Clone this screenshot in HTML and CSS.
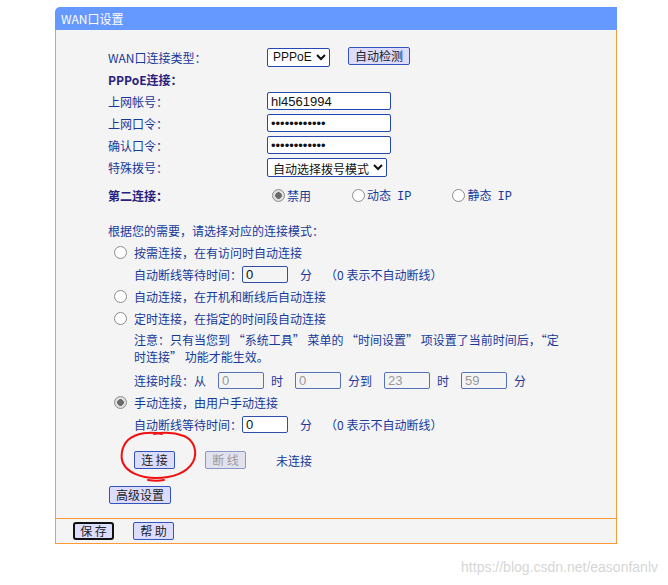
FILE: index.html
```html
<!DOCTYPE html>
<html lang="zh-CN">
  <head>
    <meta charset="utf-8" />
    <title>WAN口设置</title>
    <link rel="stylesheet" href="styles.css">
  </head>

  <body>
    <div class="panel">
      <div class="panel-head">WAN口设置</div>

      <!-- 主体 -->
      <div class="panel-body">
        <div class="row">
          <span class="label">WAN口连接类型：</span>
          <select class="field sel-type"><option>PPPoE</option></select>
          <button class="btn btn-detect">自动检测</button>
        </div>
        <div class="row">
          <span class="label strong">PPPoE连接：</span>
        </div>
        <div class="row">
          <span class="label">上网帐号：</span>
          <input class="field text" type="text" value="hl4561994">
        </div>
        <div class="row">
          <span class="label">上网口令：</span>
          <input class="field text" type="password" value="hl4561994abc">
        </div>
        <div class="row">
          <span class="label">确认口令：</span>
          <input class="field text" type="password" value="hl4561994abc">
        </div>
        <div class="row">
          <span class="label">特殊拨号：</span>
          <select class="field sel-dial"><option>自动选择拨号模式</option></select>
        </div>

        <div class="row second">
          <span class="label strong">第二连接：</span>
          <div class="radio-group">
            <label class="opt"><input type="radio" name="second" checked><span>禁用</span></label>
            <label class="opt"><input type="radio" name="second"><span>动态<span class="mono">IP</span></span></label>
            <label class="opt"><input type="radio" name="second"><span>静态<span class="mono">IP</span></span></label>
          </div>
        </div>

        <div class="row intro">根据您的需要，请选择对应的连接模式：</div>

        <label class="row mode"><input type="radio" name="mode">按需连接，在有访问时自动连接</label>
        <div class="row sub">
          <span>自动断线等待时间：</span>
          <input class="field small idle" type="text" value="0">
          <span class="unit">分</span>
          <span class="hint">（0 表示不自动断线）</span>
        </div>
        <label class="row mode"><input type="radio" name="mode">自动连接，在开机和断线后自动连接</label>
        <label class="row mode"><input type="radio" name="mode">定时连接，在指定的时间段自动连接</label>
        <p class="note">注意：只有当您到 “系统工具” 菜单的 “时间设置” 项设置了当前时间后，“定<br>时连接” 功能才能生效。</p>
        <div class="row sub time-row">
          <span>连接时段：从</span>
          <input class="field small" type="text" value="0" disabled>
          <span>时</span>
          <input class="field small" type="text" value="0" disabled>
          <span>分到</span>
          <input class="field small" type="text" value="23" disabled>
          <span>时</span>
          <input class="field small" type="text" value="59" disabled>
          <span>分</span>
        </div>
        <label class="row mode"><input type="radio" name="mode" checked>手动连接，由用户手动连接</label>
        <div class="row sub">
          <span>自动断线等待时间：</span>
          <input class="field small" type="text" value="0">
          <span class="unit">分</span>
          <span class="hint">（0 表示不自动断线）</span>
        </div>

        <div class="row sub actions">
          <button class="btn btn-small">连 接</button>
          <button class="btn btn-small" disabled>断 线</button>
          <span class="status">未连接</span>
          <svg class="mark" width="86" height="58" viewBox="0 0 86 58">
            <path d="M44 6 C32 3 18 5 10 12 C4 18 2 28 5 35 C9 44 22 50 38 50 C54 50 69 45 75 34 C80 24 76 12 66 8 C58 5 46 4 36 6 M30 52 C36 53 41 53 46 52"
                  fill="none" stroke="#f01010" stroke-width="2" stroke-linecap="round" />
          </svg>
        </div>

        <div class="row adv">
          <button class="btn btn-adv">高级设置</button>
        </div>
      </div>

      <!-- 底部按钮 -->
      <div class="panel-foot">
        <button class="btn btn-small btn-save">保 存</button>
        <button class="btn btn-small">帮 助</button>
      </div>
    </div>

    <div class="watermark">https://blog.csdn.net/easonfanlv</div>
  </body>
</html>
```

FILE: styles.css
```css
* {
  box-sizing: border-box;
}

body {
  margin: 0;
  background: #fff;
  font-family: "Noto Sans CJK SC", sans-serif;
  font-size: 12px;
  color: #17399a;
}

/* 面板 */
.panel {
  width: 562px;
  margin: 7px 0 0 55px;
}

.panel-head {
  height: 23px;
  line-height: 23px;
  padding-left: 6px;
  background: #6699ff;
  color: #fff;
  border-top-left-radius: 5px;
}

.panel-body {
  background: #f4f4f4;
  border-left: 1px solid #ff9933;
  border-right: 1px solid #ff9933;
  padding: 16px 0 12px 52px;
}

.panel-foot {
  height: 26px;
  display: flex;
  align-items: center;
  gap: 19px;
  padding-left: 17px;
  background: #f4f4f4;
  border: 1px solid #ff9933;
}

/* 行 */
.row {
  display: flex;
  align-items: center;
  height: 22px;
  white-space: nowrap;
}

.label {
  width: 159px;
}

.label.strong {
  font-weight: bold;
  color: #2a1f80;
}

.mono {
  margin-left: 6px;
  font-family: "Liberation Mono", monospace;
  font-size: 12px;
}

/* 输入框 */
.field {
  height: 18px;
  padding: 0 3px;
  border: 1px solid #2548b0;
  border-radius: 2px;
  background: #fff;
  color: #111;
  font: 13px "Liberation Sans", sans-serif;
}

.text {
  width: 124px;
}

.sel-type {
  width: 63px;
  height: 19px;
  padding: 0 0 0 1px;
  font-size: 12px;
}

.sel-dial {
  width: 120px;
  height: 19px;
  padding: 0 1px;
  font-family: "Noto Sans CJK SC", sans-serif;
  font-size: 12px;
}

.small {
  width: 46px;
  height: 17px;
  border-color: #2f4fa8;
}

.small.idle {
  background: #f4f4f4;
}

.small:disabled {
  color: #999;
  border-color: #5572b8;
  background: #f4f4f4;
}

/* 按钮 */
.btn {
  height: 18px;
  padding: 0 4px;
  font-family: "Noto Sans CJK SC", sans-serif;
  font-size: 12px;
  line-height: 14px;
  color: #222;
  background: #dcdcff;
  border: 1px solid #3355bb;
  border-radius: 2px;
}

.btn:disabled {
  color: #9a9a9a;
  background: #e2e2ee;
  border-color: #8a98c8;
}

.btn-detect {
  width: 62px;
  margin: -2px 0 0 18px;
}

.btn-small {
  width: 41px;
}

.btn-adv {
  width: 62px;
  margin-left: 1px;
}

.btn-save {
  border: 2px solid #111;
  border-radius: 3px;
}

/* 单选 */
input[type="radio"] {
  appearance: none;
  width: 13px;
  height: 13px;
  margin: 0;
  border: 1px solid #8c8c8c;
  border-radius: 50%;
  background: #fff;
}

input[type="radio"]:checked {
  background: radial-gradient(circle, #6a6a6a 0 3px, #dedede 3.6px);
}

.second {
  margin-top: 6px;
}

.radio-group {
  display: flex;
  gap: 41px;
  margin-left: 5px;
}

.opt {
  display: flex;
  align-items: center;
  gap: 2px;
}

.intro {
  margin-top: 13px;
}

.mode {
  gap: 7px;
  padding-left: 6px;
}

.sub {
  padding-left: 26px;
}

.unit {
  margin-left: 12px;
}

.hint {
  margin-left: 13px;
}

.note {
  margin: 2px 0 0;
  padding-left: 26px;
  line-height: 17px;
  white-space: nowrap;
}

.time-row {
  margin-top: 4px;
}

.time-row input {
  margin: 0 7px 0 12px;
}

.actions {
  position: relative;
  margin-top: 14px;
}

.actions .btn + .btn {
  margin-left: 30px;
}

.status {
  margin-left: 30px;
}

.mark {
  position: absolute;
  left: 10px;
  top: -21px;
}

.adv {
  margin-top: 13px;
}

.watermark {
  margin-top: 15px;
  padding-right: 10px;
  text-align: right;
  font: 14px/16px "Liberation Sans", sans-serif;
  color: #d6d6d6;
}
```
